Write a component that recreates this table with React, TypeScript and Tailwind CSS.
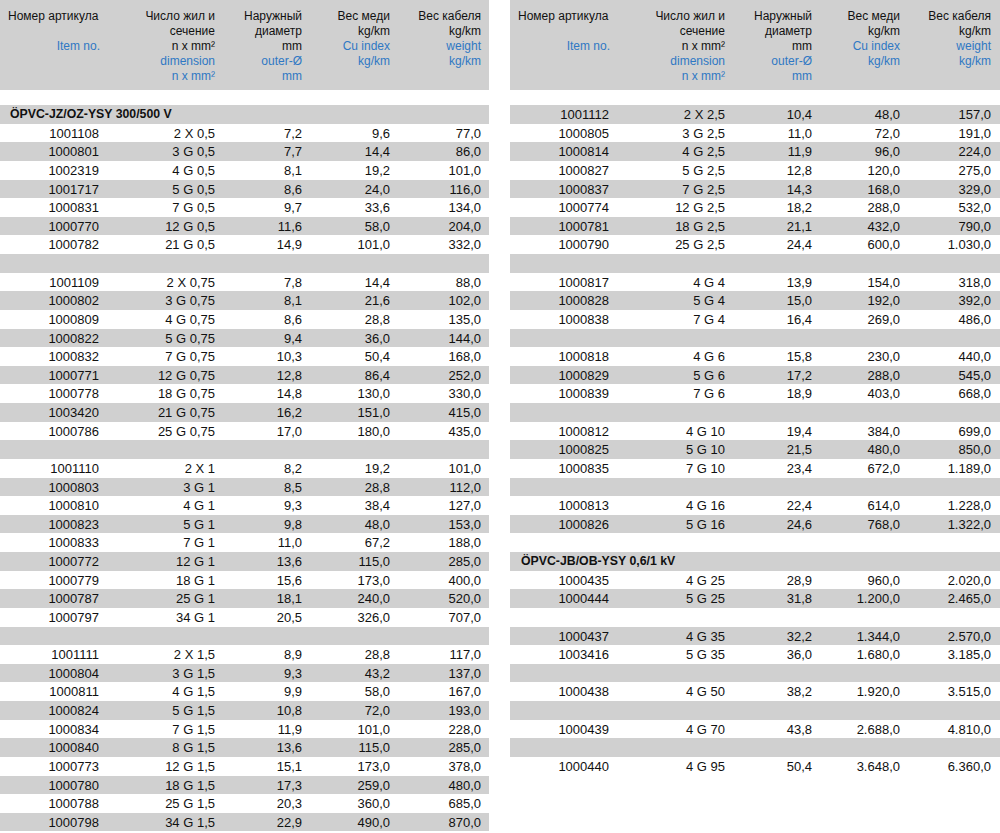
type Row = string[] | "blank" | { title: string }

const B: Row = "blank"

const leftRows: Row[] = [
  { title: "ÖPVC-JZ/OZ-YSY 300/500 V" },
  ["1001108", "2 X 0,5", "7,2", "9,6", "77,0"],
  ["1000801", "3 G 0,5", "7,7", "14,4", "86,0"],
  ["1002319", "4 G 0,5", "8,1", "19,2", "101,0"],
  ["1001717", "5 G 0,5", "8,6", "24,0", "116,0"],
  ["1000831", "7 G 0,5", "9,7", "33,6", "134,0"],
  ["1000770", "12 G 0,5", "11,6", "58,0", "204,0"],
  ["1000782", "21 G 0,5", "14,9", "101,0", "332,0"],
  B,
  ["1001109", "2 X 0,75", "7,8", "14,4", "88,0"],
  ["1000802", "3 G 0,75", "8,1", "21,6", "102,0"],
  ["1000809", "4 G 0,75", "8,6", "28,8", "135,0"],
  ["1000822", "5 G 0,75", "9,4", "36,0", "144,0"],
  ["1000832", "7 G 0,75", "10,3", "50,4", "168,0"],
  ["1000771", "12 G 0,75", "12,8", "86,4", "252,0"],
  ["1000778", "18 G 0,75", "14,8", "130,0", "330,0"],
  ["1003420", "21 G 0,75", "16,2", "151,0", "415,0"],
  ["1000786", "25 G 0,75", "17,0", "180,0", "435,0"],
  B,
  ["1001110", "2 X 1", "8,2", "19,2", "101,0"],
  ["1000803", "3 G 1", "8,5", "28,8", "112,0"],
  ["1000810", "4 G 1", "9,3", "38,4", "127,0"],
  ["1000823", "5 G 1", "9,8", "48,0", "153,0"],
  ["1000833", "7 G 1", "11,0", "67,2", "188,0"],
  ["1000772", "12 G 1", "13,6", "115,0", "285,0"],
  ["1000779", "18 G 1", "15,6", "173,0", "400,0"],
  ["1000787", "25 G 1", "18,1", "240,0", "520,0"],
  ["1000797", "34 G 1", "20,5", "326,0", "707,0"],
  B,
  ["1001111", "2 X 1,5", "8,9", "28,8", "117,0"],
  ["1000804", "3 G 1,5", "9,3", "43,2", "137,0"],
  ["1000811", "4 G 1,5", "9,9", "58,0", "167,0"],
  ["1000824", "5 G 1,5", "10,8", "72,0", "193,0"],
  ["1000834", "7 G 1,5", "11,9", "101,0", "228,0"],
  ["1000840", "8 G 1,5", "13,6", "115,0", "285,0"],
  ["1000773", "12 G 1,5", "15,1", "173,0", "378,0"],
  ["1000780", "18 G 1,5", "17,3", "259,0", "480,0"],
  ["1000788", "25 G 1,5", "20,3", "360,0", "685,0"],
  ["1000798", "34 G 1,5", "22,9", "490,0", "870,0"],
]

const rightRows: Row[] = [
  ["1001112", "2 X 2,5", "10,4", "48,0", "157,0"],
  ["1000805", "3 G 2,5", "11,0", "72,0", "191,0"],
  ["1000814", "4 G 2,5", "11,9", "96,0", "224,0"],
  ["1000827", "5 G 2,5", "12,8", "120,0", "275,0"],
  ["1000837", "7 G 2,5", "14,3", "168,0", "329,0"],
  ["1000774", "12 G 2,5", "18,2", "288,0", "532,0"],
  ["1000781", "18 G 2,5", "21,1", "432,0", "790,0"],
  ["1000790", "25 G 2,5", "24,4", "600,0", "1.030,0"],
  B,
  ["1000817", "4 G 4", "13,9", "154,0", "318,0"],
  ["1000828", "5 G 4", "15,0", "192,0", "392,0"],
  ["1000838", "7 G 4", "16,4", "269,0", "486,0"],
  B,
  ["1000818", "4 G 6", "15,8", "230,0", "440,0"],
  ["1000829", "5 G 6", "17,2", "288,0", "545,0"],
  ["1000839", "7 G 6", "18,9", "403,0", "668,0"],
  B,
  ["1000812", "4 G 10", "19,4", "384,0", "699,0"],
  ["1000825", "5 G 10", "21,5", "480,0", "850,0"],
  ["1000835", "7 G 10", "23,4", "672,0", "1.189,0"],
  B,
  ["1000813", "4 G 16", "22,4", "614,0", "1.228,0"],
  ["1000826", "5 G 16", "24,6", "768,0", "1.322,0"],
  B,
  { title: "ÖPVC-JB/OB-YSY 0,6/1 kV" },
  ["1000435", "4 G 25", "28,9", "960,0", "2.020,0"],
  ["1000444", "5 G 25", "31,8", "1.200,0", "2.465,0"],
  B,
  ["1000437", "4 G 35", "32,2", "1.344,0", "2.570,0"],
  ["1003416", "5 G 35", "36,0", "1.680,0", "3.185,0"],
  B,
  ["1000438", "4 G 50", "38,2", "1.920,0", "3.515,0"],
  B,
  ["1000439", "4 G 70", "43,8", "2.688,0", "4.810,0"],
  B,
  ["1000440", "4 G 95", "50,4", "3.648,0", "6.360,0"],
]

const cols = "grid grid-cols-[99px_116px_87px_88px_91px]"

function Header() {
  return (
    <div className={`${cols} h-[90px] bg-[#d0d0d0] pt-[9px] text-right text-[12px] leading-[15px]`}>
      <div className="flex flex-col">
        <span className="whitespace-nowrap pl-2 text-left">Номер артикула</span>
        <span>&nbsp;</span>
        <span className="-mr-px text-[#2f78c4]">Item no.</span>
      </div>
      <div className="flex flex-col">
        <span>Число жил и</span>
        <span>сечение</span>
        <span>n x mm²</span>
        <span className="text-[#2f78c4]">dimension</span>
        <span className="text-[#2f78c4]">n x mm²</span>
      </div>
      <div className="flex flex-col">
        <span>Наружный</span>
        <span>диаметр</span>
        <span>mm</span>
        <span className="text-[#2f78c4]">outer-Ø</span>
        <span className="text-[#2f78c4]">mm</span>
      </div>
      <div className="flex flex-col">
        <span>Вес меди</span>
        <span>kg/km</span>
        <span className="text-[#2f78c4]">Cu index</span>
        <span className="text-[#2f78c4]">kg/km</span>
      </div>
      <div className="flex flex-col">
        <span>Вес кабеля</span>
        <span>kg/km</span>
        <span className="text-[#2f78c4]">weight</span>
        <span className="text-[#2f78c4]">kg/km</span>
      </div>
    </div>
  )
}

function CableTable({ rows, titleIndent }: { rows: Row[]; titleIndent: string }) {
  return (
    <div className="flex flex-col">
      <Header />
      <div className="mt-[15px] flex flex-col">
        {rows.map((row, i) => {
          const shade = i % 2 === 0 ? "bg-[#d0d0d0]" : "bg-white"
          if (row === "blank") return <div key={i} className={`h-[18.63px] ${shade}`} />
          if (!Array.isArray(row)) {
            return (
              <div key={i} className={`flex h-[18.63px] items-center font-bold text-[12.3px] ${titleIndent} ${shade}`}>
                {row.title}
              </div>
            )
          }
          return (
            <div key={i} className={`${cols} h-[18.63px] items-center text-right ${shade}`}>
              {row.map((cell, j) => (
                <span key={j}>{cell}</span>
              ))}
            </div>
          )
        })}
      </div>
    </div>
  )
}

export default function App() {
  return (
    <div className="flex h-[833px] w-[1000px] gap-[21px] overflow-hidden bg-white font-['Liberation_Sans',Arial,sans-serif] text-[13px] text-[#111]">
      <div className="w-[489px]">
        <CableTable rows={leftRows} titleIndent="pl-[10px]" />
      </div>
      <div className="w-[490px]">
        <CableTable rows={rightRows} titleIndent="pl-[11px]" />
      </div>
    </div>
  )
}
